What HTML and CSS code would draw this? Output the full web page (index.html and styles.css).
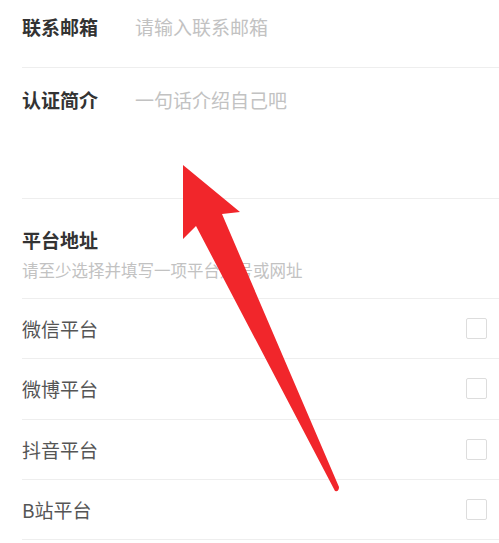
FILE: index.html
```html
<!DOCTYPE html>
<html lang="zh-CN">
<head>
    <meta charset="UTF-8">
    <meta name="viewport" content="width=device-width, initial-scale=1.0">
    <title>认证信息</title>
    <link rel="stylesheet" href="styles.css">
</head>
<body>
  <div class="form">
    <div class="field field-email">
      <span class="label">联系邮箱</span>
      <span class="placeholder">请输入联系邮箱</span>
    </div>
    <div class="field field-intro">
      <span class="label">认证简介</span>
      <span class="placeholder">一句话介绍自己吧</span>
    </div>

    <div class="section-head">
      <h3>平台地址</h3>
      <p>请至少选择并填写一项平台账号或网址</p>
    </div>

    <div class="platform">
      <span>微信平台</span>
      <span class="check"></span>
    </div>
    <div class="platform">
      <span>微博平台</span>
      <span class="check"></span>
    </div>
    <div class="platform">
      <span>抖音平台</span>
      <span class="check"></span>
    </div>
    <div class="platform">
      <span>B站平台</span>
      <span class="check"></span>
    </div>
  </div>

  <!-- annotation arrow drawn over the form -->
  <svg class="arrow" width="499" height="543" viewBox="0 0 499 543">
    <path d="M183 165 L240 212 L222 214 L339 487 Q339 492 335 491 L196 226 L183 239 Z" fill="#f1262b"/>
  </svg>
</body>
</html>
```

FILE: styles.css
```css
body {
  margin: 0;
  padding: 0;
  background: #fff;
  font-family: "Noto Sans CJK SC", "Noto Sans", sans-serif;
  position: relative;
  overflow: hidden;
}
.form {
  padding-left: 22px;
}
.field {
  display: flex;
  align-items: flex-start;
  border-bottom: 1px solid #eeeeee;
  box-sizing: border-box;
}
.field-email {
  height: 68px;
  padding-top: 17px;
}
.field-intro {
  height: 131px;
  padding-top: 22px;
}
.label {
  width: 113px;
  font-size: 19px;
  line-height: 20px;
  font-weight: bold;
  color: #333;
}
.placeholder {
  font-size: 19px;
  line-height: 20px;
  color: #c2c2c2;
}
.section-head {
  padding-top: 31px;
  height: 100px;
  box-sizing: border-box;
  border-bottom: 1px solid #eeeeee;
}
.section-head h3 {
  margin: 0;
  font-size: 19px;
  line-height: 20px;
  color: #333;
}
.section-head p {
  margin: 12px 0 0;
  font-size: 16.5px;
  line-height: 16px;
  color: #c2c2c2;
}
.platform {
  display: flex;
  align-items: center;
  justify-content: space-between;
  height: 60.25px;
  box-sizing: border-box;
  border-bottom: 1px solid #eeeeee;
  padding-right: 12px;
  font-size: 19px;
  color: #555;
}
.check {
  width: 19px;
  height: 19px;
  border: 1px solid #dddddd;
  border-radius: 2px;
}
.arrow {
  position: absolute;
  left: 0;
  top: 0;
}
```
